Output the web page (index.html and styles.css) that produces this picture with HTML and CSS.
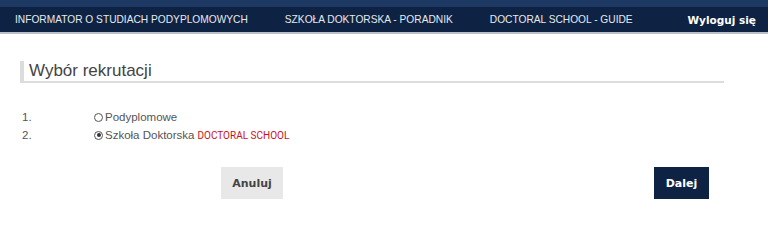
FILE: index.html
```html
<!DOCTYPE html>
<html lang="pl">
<head>
    <meta charset="UTF-8">
    <title>Wybór rekrutacji</title>
    <link rel="stylesheet" href="styles.css">
</head>
<body>
    <div class="topbar"></div>
    <nav class="navbar">
        <a href="#" class="nav-link">INFORMATOR O STUDIACH PODYPLOMOWYCH</a>
        <a href="#" class="nav-link">SZKOŁA DOKTORSKA - PORADNIK</a>
        <a href="#" class="nav-link">DOCTORAL SCHOOL - GUIDE</a>
        <a href="#" class="nav-logout">Wyloguj się</a>
    </nav>

    <main class="content">
        <h2 class="section-title">Wybór rekrutacji</h2>

        <div class="options">
            <label class="option">
                <span class="option-num">1.</span>
                <input type="radio" name="rekrutacja" class="radio">
                <span class="option-label">Podyplomowe</span>
            </label>
            <label class="option">
                <span class="option-num">2.</span>
                <input type="radio" name="rekrutacja" class="radio" checked>
                <span class="option-label">Szkoła Doktorska</span>
                <span class="option-note">DOCTORAL SCHOOL</span>
            </label>
        </div>

        <div class="actions">
            <button class="btn btn-cancel">Anuluj</button>
            <button class="btn btn-next">Dalej</button>
        </div>
    </main>
</body>
</html>
```

FILE: styles.css
```css
:root {
    --navy: #0e2343;
    --navy-top: #1d3963;
    --text: #555;
    --line: #dcdcdc;
}

body {
    margin: 0;
    font-family: Arial, 'Liberation Sans', sans-serif;
    color: var(--text);
    background: white;
}

.topbar {
    height: 7px;
    background: var(--navy-top);
}

.navbar {
    display: flex;
    align-items: center;
    height: 25px;
    background: var(--navy);
    border-bottom: 2px solid #b9c0ca;
    padding: 0 12px 0 15px;
    white-space: nowrap;
}

.nav-link {
    flex-shrink: 0;
    color: #e6e9ee;
    text-decoration: none;
    font-size: 10.2px;
    margin-right: 37px;
}

.nav-logout {
    flex-shrink: 0;
    margin-left: auto;
    color: white;
    font-family: Verdana, 'DejaVu Sans', sans-serif;
    font-weight: bold;
    font-size: 10.5px;
    text-decoration: none;
}

.content {
    padding: 27px 44px 0 20px;
}

.section-title {
    margin: 0;
    font-size: 17px;
    font-weight: normal;
    color: #444;
    border-left: 4px solid var(--line);
    border-bottom: 2px solid var(--line);
    padding: 0 0 1px 5px;
    line-height: 19px;
}

.options {
    margin-top: 27px;
    display: flex;
    flex-direction: column;
    gap: 4px;
    font-size: 11.5px;
}

.option {
    display: flex;
    align-items: center;
    height: 14px;
}

.option-num {
    width: 72px;
    padding-left: 2px;
}

.radio {
    appearance: none;
    width: 9px;
    height: 9px;
    margin: 0 2px 0 0;
    border: 1px solid #555;
    border-radius: 50%;
    background: white;
    position: relative;
}

.radio:checked::after {
    content: "";
    position: absolute;
    left: 1.5px;
    top: 1.5px;
    width: 4px;
    height: 4px;
    border-radius: 50%;
    background: #333;
}

.option-note {
    color: #cc1020;
    font-family: Roboto, sans-serif;
    font-size: 10px;
    margin-left: 3px;
}

.actions {
    display: flex;
    justify-content: space-between;
    padding: 25px 15px 0 201px;
}

.btn {
    border: none;
    height: 32px;
    font-family: Verdana, 'DejaVu Sans', sans-serif;
    font-weight: bold;
    font-size: 11px;
    cursor: pointer;
}

.btn-cancel {
    width: 62px;
    background: #e8e8e8;
    color: #444;
}

.btn-next {
    width: 55px;
    background: var(--navy);
    color: white;
}
```
